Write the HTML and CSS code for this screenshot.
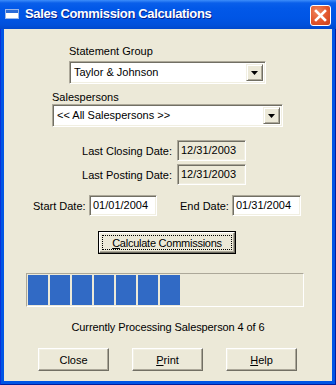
FILE: index.html
```html
<!DOCTYPE html>
<html>
<head>
<meta charset="utf-8">
<link rel="stylesheet" href="styles.css">
</head>
<body>
<div class="window">
  <div class="titlebar">
    <span class="app-icon"><span class="app-icon-bar"></span></span>
    <span class="title">Sales Commission Calculations</span>
    <span class="close-btn">
      <svg width="13" height="13" viewBox="0 0 13 13"><path d="M2 2 L11 11 M11 2 L2 11" stroke="#fff" stroke-width="2.6" stroke-linecap="square"/></svg>
    </span>
  </div>
  <div class="client">
    <div class="label lbl-group">Statement Group</div>
    <div class="combo combo-group">
      <span class="combo-text">Taylor &amp; Johnson</span>
      <span class="drop"><svg width="7" height="4" viewBox="0 0 7 4"><path d="M0 0 H7 L3.5 4 Z" fill="#000"/></svg></span>
    </div>
    <div class="label lbl-sales">Salespersons</div>
    <div class="combo combo-sales">
      <span class="combo-text">&lt;&lt; All Salespersons &gt;&gt;</span>
      <span class="drop"><svg width="7" height="4" viewBox="0 0 7 4"><path d="M0 0 H7 L3.5 4 Z" fill="#000"/></svg></span>
    </div>
    <div class="ro-row row-closing">
      <span class="ro-label">Last Closing Date:</span>
      <span class="field readonly">12/31/2003</span>
    </div>
    <div class="ro-row row-posting">
      <span class="ro-label">Last Posting Date:</span>
      <span class="field readonly">12/31/2003</span>
    </div>
    <div class="date-row">
      <span class="dl dl-start">Start Date:</span>
      <span class="field edit f-start">01/01/2004</span>
      <span class="dl dl-end">End Date:</span>
      <span class="field edit f-end">01/31/2004</span>
    </div>
    <div class="calc-wrap">
      <div class="btn default-btn"><span class="focus"><u>C</u>alculate Commissions</span></div>
    </div>
    <div class="progress">
      <span class="blk"></span><span class="blk"></span><span class="blk"></span><span class="blk"></span><span class="blk"></span><span class="blk"></span><span class="blk"></span>
    </div>
    <div class="status">Currently Processing Salesperson 4 of 6</div>
    <div class="btn-row">
      <div class="btn small">Close</div>
      <div class="btn small"><u>P</u>rint</div>
      <div class="btn small"><u>H</u>elp</div>
    </div>
  </div>
</div>
</body>
</html>
```
FILE: styles.css
```css
html, body {
  margin: 0;
  padding: 0;
  width: 336px;
  height: 385px;
  overflow: hidden;
}
body {
  font-family: "Liberation Sans", Arial, sans-serif;
  font-size: 11px;
  color: #000;
}
.window {
  width: 336px;
  height: 385px;
  box-sizing: border-box;
  background: #0055E5;
  border-left: 1px solid #0831D9;
  border-right: 1px solid #001EA0;
  border-bottom: 1px solid #001EA0;
  display: flex;
  flex-direction: column;
}
.titlebar {
  height: 29px;
  margin: 0 -1px;
  flex: none;
  display: flex;
  align-items: center;
  background: linear-gradient(to bottom, #3D8DFA 0px, #0A5FEA 3px, #0258E8 8px, #0055E5 18px, #0050DB 25px, #0048CC 29px);
  position: relative;
}
.app-icon {
  width: 14px;
  height: 10px;
  margin-left: 5px;
  margin-top: -1px;
  background: #fff;
  border: 1px solid #9ab6e8;
  box-sizing: border-box;
  display: flex;
  flex-direction: column;
}
.app-icon-bar {
  height: 3px;
  background: #2a6bd8;
}
.title {
  margin-left: 6px;
  margin-top: -2px;
  color: #fff;
  font-weight: bold;
  font-size: 13px;
  text-shadow: 1px 1px 0 #0a1f8a;
  letter-spacing: -0.35px;
}
.close-btn {
  position: absolute;
  left: 310px;
  top: 5px;
  width: 21px;
  height: 21px;
  box-sizing: border-box;
  border: 1px solid #fff;
  border-radius: 3px;
  background: radial-gradient(circle at 35% 30%, #F0875F 0%, #E2562C 55%, #C8411B 100%);
  display: flex;
  align-items: center;
  justify-content: center;
}
.client {
  flex: 1;
  margin: 0 3px 3px 3px;
  background: #ECE9D8;
  position: relative;
  display: flex;
  flex-direction: column;
  align-items: flex-start;
}
.label {
  line-height: 13px;
  height: 13px;
}
.lbl-group {
  margin: 16px 0 0 65px;
}
.combo {
  height: 23px;
  box-sizing: border-box;
  background: #fff;
  border: 1px solid;
  border-color: #ACA899 #fff #fff #ACA899;
  box-shadow: inset 1px 1px 0 #716F64, inset -1px -1px 0 #F1EFE2;
  display: flex;
  align-items: center;
  padding: 2px;
}
.combo-group {
  margin: 3px 0 0 65px;
  width: 197px;
}
.lbl-sales {
  margin: 7px 0 0 48px;
}
.combo-sales {
  margin: 0 0 0 48px;
  width: 231px;
}
.combo-text {
  flex: 1;
  padding-left: 2px;
  line-height: 17px;
}
.drop {
  width: 17px;
  height: 17px;
  box-sizing: border-box;
  background: #ECE9D8;
  border: 1px solid;
  border-color: #F1EFE2 #716F64 #716F64 #F1EFE2;
  box-shadow: inset 1px 1px 0 #fff, inset -1px -1px 0 #ACA899;
  display: flex;
  align-items: center;
  justify-content: center;
}
.field {
  display: block;
  height: 21px;
  box-sizing: border-box;
  border: 1px solid;
  border-color: #ACA899 #fff #fff #ACA899;
  box-shadow: inset 1px 1px 0 #716F64, inset -1px -1px 0 #F1EFE2;
  padding: 0 0 0 3px;
  line-height: 19px;
}
.readonly {
  background: #ECE9D8;
  width: 69px;
}
.edit {
  background: #fff;
}
.ro-row {
  display: flex;
  align-items: center;
  gap: 5px;
  margin-left: 0;
}
.ro-label {
  width: 168px;
  text-align: right;
}
.row-closing {
  margin-top: 13px;
}
.row-posting {
  margin-top: 3px;
}
.date-row {
  display: flex;
  align-items: center;
  margin-top: 10px;
}
.dl-start {
  margin-left: 29px;
  width: 56px;
}
.f-start {
  width: 68px;
}
.dl-end {
  margin-left: 23px;
  width: 52px;
}
.f-end {
  width: 69px;
}
.btn {
  box-sizing: border-box;
  height: 23px;
  background: #ECE9D8;
  border: 1px solid;
  border-color: #fff #716F64 #716F64 #fff;
  box-shadow: inset -1px -1px 0 #ACA899, inset 1px 1px 0 #F1EFE2;
  display: flex;
  align-items: center;
  justify-content: center;
}
.calc-wrap {
  margin: 15px 0 0 94px;
  width: 138px;
  height: 23px;
  box-sizing: border-box;
  border: 1px solid #000;
  display: flex;
}
.default-btn {
  flex: 1;
  height: 21px;
  padding: 2px;
}
.focus {
  flex: 1;
  align-self: stretch;
  border: 1px dotted #000;
  display: flex;
  align-items: center;
  justify-content: center;
  font-size: 11px;
  letter-spacing: -0.25px;
}
.progress {
  margin: 19px 0 0 22px;
  width: 278px;
  height: 34px;
  box-sizing: border-box;
  border: 1px solid;
  border-color: #ACA899 #fff #fff #ACA899;
  padding: 1px 1px;
  display: flex;
  gap: 2px;
}
.blk {
  width: 20px;
  height: 30px;
  background: #316AC5;
}
.status {
  align-self: stretch;
  text-align: center;
  margin-top: 14px;
  line-height: 13px;
  font-size: 11px;
  letter-spacing: -0.1px;
}
.btn-row {
  display: flex;
  margin: 14px 0 0 34px;
  gap: 23px;
}
.btn.small {
  width: 71px;
  font-size: 11px;
}
u {
  text-decoration: underline;
  text-underline-offset: 1px;
}
```
